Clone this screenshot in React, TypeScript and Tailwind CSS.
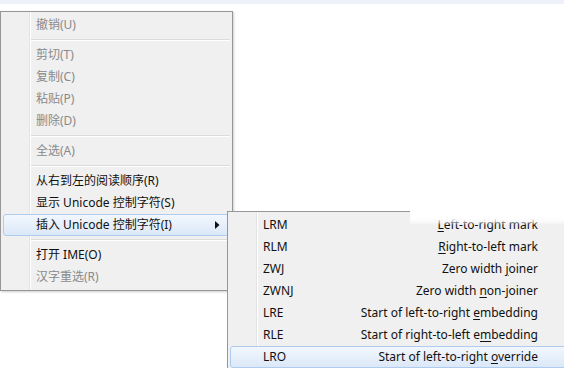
import React from "react"

type Item = { label: string; disabled?: boolean; active?: boolean; arrow?: boolean } | "sep"

const mainItems: Item[] = [
  { label: "撤销(U)", disabled: true },
  "sep",
  { label: "剪切(T)", disabled: true },
  { label: "复制(C)", disabled: true },
  { label: "粘贴(P)", disabled: true },
  { label: "删除(D)", disabled: true },
  "sep",
  { label: "全选(A)", disabled: true },
  "sep",
  { label: "从右到左的阅读顺序(R)" },
  { label: "显示 Unicode 控制字符(S)" },
  { label: "插入 Unicode 控制字符(I)", active: true, arrow: true },
  "sep",
  { label: "打开 IME(O)" },
  { label: "汉字重选(R)", disabled: true },
]

// [before, underlined, after]
const subItems: { code: string; desc: [string, string, string]; active?: boolean }[] = [
  { code: "LRM", desc: ["", "L", "eft-to-right mark"] },
  { code: "RLM", desc: ["", "R", "ight-to-left mark"] },
  { code: "ZWJ", desc: ["Zero width ", "j", "oiner"] },
  { code: "ZWNJ", desc: ["Zero width ", "n", "on-joiner"] },
  { code: "LRE", desc: ["Start of left-to-right ", "e", "mbedding"] },
  { code: "RLE", desc: ["Start of right-to-left e", "m", "bedding"] },
  { code: "LRO", desc: ["Start of left-to-right ", "o", "verride"], active: true },
]

const font = { fontFamily: '"Noto Sans", "Noto Sans CJK SC", sans-serif' }

// menu body with the win7 gutter lines drawn in the background
const menuBox =
  "border border-[#979797] py-[2px] bg-[linear-gradient(to_right,#f0f0f0_28px,#e2e3e3_28px,#e2e3e3_29px,#ffffff_29px,#ffffff_30px,#f0f0f0_30px)]"

const rowBase = "mx-[2px] h-[22px] flex items-center pl-[32px] rounded-[3px] border"
const rowActive = "border-[#aeccf0] bg-[linear-gradient(to_bottom,#f2f7fd,#dce8f8)]"

function Separator() {
  return (
    <div className="h-2 flex flex-col justify-center pl-[30px] pr-[2px]">
      <div className="h-px bg-[#dcdcdc]" />
      <div className="h-px bg-white" />
    </div>
  )
}

export default function App() {
  return (
    <div className="relative w-[564px] h-[368px] overflow-hidden bg-white text-[12px]" style={font}>
      <div className="h-[4px] bg-[#edf2fa]" />

      {/* main context menu */}
      <div className={`absolute left-0 top-[11px] w-[233px] ${menuBox} shadow-[1px_1px_2px_rgba(0,0,0,0.2)]`}>
        {mainItems.map((it, i) =>
          it === "sep" ? (
            <Separator key={i} />
          ) : (
            <div
              key={i}
              className={`${rowBase} pr-[9px] ${it.active ? rowActive : "border-transparent"} ${
                it.disabled ? "text-[#8a8a8a]" : "text-[#111]"
              }`}
            >
              <span className="flex-1 leading-none">{it.label}</span>
              {it.arrow && (
                <svg width="5" height="8" viewBox="0 0 5 8">
                  <path d="M0 0 L4.5 4 L0 8 Z" fill="#111" />
                </svg>
              )}
            </div>
          )
        )}
      </div>

      {/* submenu */}
      <div className={`absolute left-[227px] top-[211px] w-[345px] ${menuBox}`}>
        {subItems.map((it) => (
          <div
            key={it.code}
            className={`${rowBase} pr-[30px] text-[#111] ${it.active ? rowActive : "border-transparent"}`}
          >
            <span className="w-[60px]">{it.code}</span>
            <span className="flex-1 text-right">
              {it.desc[0]}
              <span className="underline underline-offset-2">{it.desc[1]}</span>
              {it.desc[2]}
            </span>
          </div>
        ))}
      </div>

      {/* washed-out corner over the submenu top */}
      <div className="absolute left-[410px] top-[205px] w-[160px] h-[20px] bg-[linear-gradient(to_bottom,#ffffff_65%,rgba(255,255,255,0.6)_85%,rgba(255,255,255,0))]" />
    </div>
  )
}
